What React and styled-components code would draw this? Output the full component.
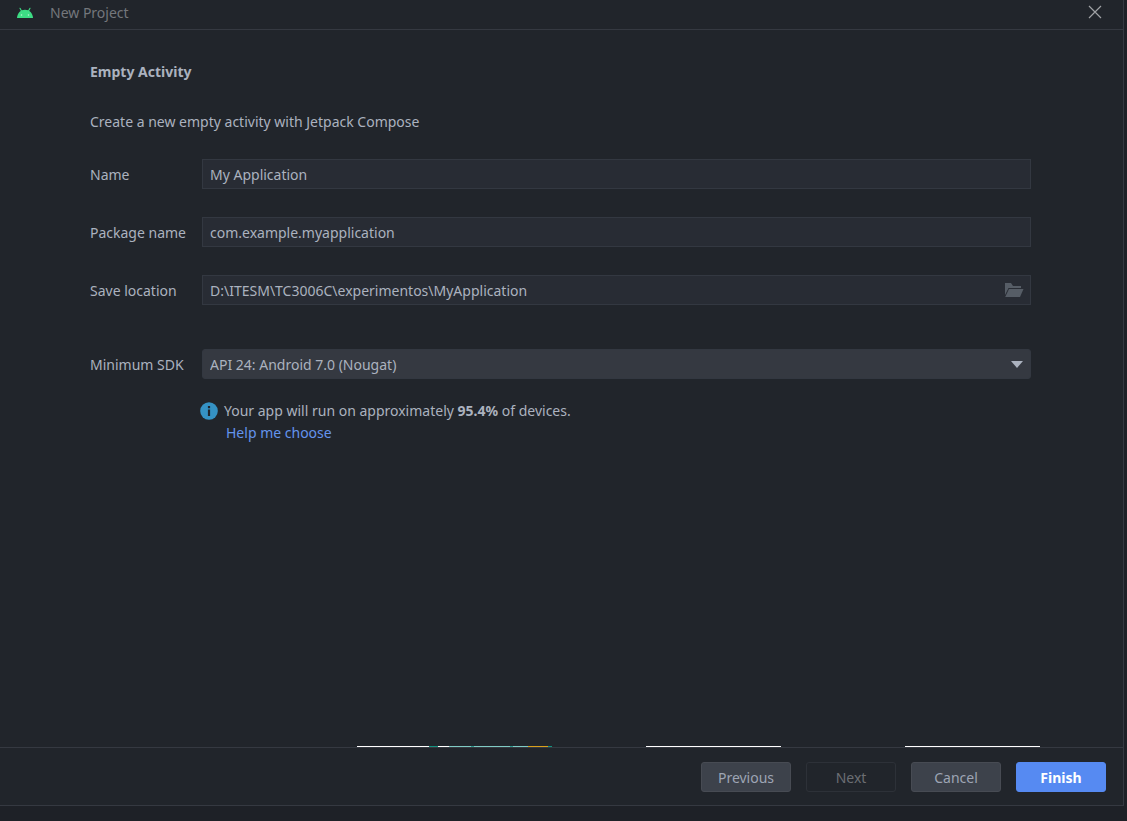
import React, { useState } from "react";
import styled, { createGlobalStyle, css } from "styled-components";

const GlobalStyle = createGlobalStyle`
  *, *::before, *::after { box-sizing: border-box; }
  body {
    margin: 0;
    background: #1e2127;
    color: #abb2bf;
    font: 14px/22px "Segoe UI", "Noto Sans", "Open Sans", sans-serif;
  }
`;

const Screen = styled.div`
  display: flex;
  min-height: 100vh;
  padding: 0 3px 15px 0;
`;

const Dialog = styled.div`
  display: flex;
  flex: 1;
  flex-direction: column;
  background: #21252b;
  border: solid #353941;
  border-width: 0 1px 1px 0;
`;

const TitleBar = styled.header`
  display: flex;
  align-items: center;
  height: 30px;
  padding: 0 19px 4px 16px;
  border-bottom: 1px solid #353941;
  color: #74777c;
`;

const Title = styled.span`
  flex: 1;
  margin-left: 16px;
`;

const CloseButton = styled.button`
  display: flex;
  padding: 2px 2px 4px;
  border: 0;
  background: none;
  color: #a0a2a5;
`;

const Content = styled.main`
  display: flex;
  flex: 1;
  flex-direction: column;
  padding: 31px 92px 0 90px;
`;

const Heading = styled.h1`
  margin: 0;
  font-size: 14px;
  line-height: 22px;
  font-weight: 700;
`;

const Description = styled.p`
  margin: 28px 0 26px;
`;

const Form = styled.form`
  display: flex;
  flex-direction: column;
`;

const Row = styled.div`
  display: grid;
  grid-template-columns: 112px 1fr;
  align-items: center;
  margin-top: ${(p) => (p.$gap || 0)}px;
`;

const Label = styled.label`
  padding-top: 2px;
`;

const Field = styled.div`
  position: relative;
  display: flex;
`;

const control = css`
  width: 100%;
  height: 30px;
  margin: 0;
  padding: 1px 7px 0;
  color: inherit;
  font: inherit;
  outline: none;
`;

const TextInput = styled.input`
  ${control}
  border: 1px solid #333841;
  background: #282c34;
`;

const Select = styled.select`
  ${control}
  appearance: none;
  border: 1px solid #333841;
  border-radius: 3px;
  background: #353941;
`;

const BrowseButton = styled.button`
  position: absolute;
  top: 7px;
  right: 7px;
  display: flex;
  padding: 0;
  border: 0;
  background: none;
  color: #565d66;
`;

const Arrow = styled.svg`
  position: absolute;
  top: 12px;
  right: 8px;
  pointer-events: none;
`;

const Hint = styled.div`
  margin: 21px 0 0 110px;
`;

const HintLine = styled.p`
  display: flex;
  align-items: center;
  gap: 6px;
  margin: 0;
`;

const HelpLink = styled.a`
  margin-left: 26px;
  color: #6494ed;
  text-decoration: none;
`;

const Peek = styled.div`
  display: flex;
  height: 1px;
  padding: 0 83px 0 357px;
  justify-content: space-between;
`;

const PeekCard = styled.div`
  display: flex;
  width: ${(p) => p.$width}px;
  background: #fff;
`;

const Stripe = styled.span`
  flex: ${(p) => p.$size};
  background: ${(p) => p.$color};
`;

const PeekPair = styled.div`
  display: flex;
  gap: 124px;
`;

const Footer = styled.footer`
  display: flex;
  justify-content: flex-end;
  gap: 15px;
  padding: 14px 17px 13px;
  border-top: 1px solid #353941;
`;

const Button = styled.button`
  width: 90px;
  height: 30px;
  padding: 1px 0 0;
  border: 1px solid ${(p) => (p.$primary ? "#568af2" : "#474b53")};
  border-radius: 3px;
  background: ${(p) => (p.$primary ? "#568af2" : "#3d424b")};
  color: ${(p) => (p.$primary ? "#fff" : "#9da5b4")};
  font: inherit;
  font-weight: ${(p) => (p.$primary ? 700 : 400)};

  &:disabled {
    border-color: #2d3138;
    background: transparent;
    color: #6b6e73;
  }
`;

const stripes = [
  [72, "#ffffff"],
  [9, "#15927f"],
  [11, "#ffffff"],
  [22, "#80cbc4"],
  [3, "#2f9a8f"],
  [36, "#80cbc4"],
  [3, "#2f9a8f"],
  [15, "#80cbc4"],
  [20, "#d9a01c"],
  [4, "#15927f"],
];

const AndroidIcon = () => (
  <svg width="18" height="18" viewBox="0 0 18 18" aria-hidden="true">
    <path d="M4 4.300 5.800 7.600M14 4.300 12.200 7.600" stroke="#3ddc84" strokeWidth="1.100" strokeLinecap="round" />
    <path d="M1 14C1.300 9.300 4.600 5.800 9 5.800s7.700 3.500 8 8.200Z" fill="#3ddc84" />
    <circle cx="5.500" cy="11" r=".8" fill="#b9f3d1" />
    <circle cx="12.500" cy="11" r=".8" fill="#b9f3d1" />
  </svg>
);

const CloseIcon = () => (
  <svg width="14" height="14" viewBox="0 0 14 14" aria-hidden="true">
    <path d="m1 1 12 12M13 1 1 13" stroke="currentColor" strokeWidth="1.2" />
  </svg>
);

const FolderIcon = () => (
  <svg width="20" height="16" viewBox="0 0 20 16" fill="currentColor" aria-hidden="true">
    <path d="M1 13V1h6l2 3h8v2H4.500Z" />
    <path d="M5 7h14.500L16 15H1.200Z" />
  </svg>
);

const InfoIcon = () => (
  <svg width="18" height="18" viewBox="0 0 18 18" aria-hidden="true">
    <circle cx="9" cy="9" r="8.800" fill="#3592c4" />
    <path d="M7.900 4h2.200v2.200H7.900ZM7.900 7.500h2.200V14H7.900Z" fill="#21252b" />
  </svg>
);

export default function App() {
  const [name, setName] = useState("My Application");
  const [pkg, setPkg] = useState("com.example.myapplication");
  const [location, setLocation] = useState("D:\\ITESM\\TC3006C\\experimentos\\MyApplication");

  return (
    <>
      <GlobalStyle />
      <Screen>
        <Dialog role="dialog" aria-labelledby="dialog-title">
          <TitleBar>
            <AndroidIcon />
            <Title id="dialog-title">New Project</Title>
            <CloseButton type="button" aria-label="Close">
              <CloseIcon />
            </CloseButton>
          </TitleBar>

          <Content>
            <Heading>Empty Activity</Heading>
            <Description>Create a new empty activity with Jetpack Compose</Description>
            <Form>
              <Row>
                <Label htmlFor="name">Name</Label>
                <Field>
                  <TextInput id="name" value={name} onChange={(e) => setName(e.target.value)} />
                </Field>
              </Row>
              <Row $gap={28}>
                <Label htmlFor="package">Package name</Label>
                <Field>
                  <TextInput id="package" value={pkg} onChange={(e) => setPkg(e.target.value)} />
                </Field>
              </Row>
              <Row $gap={28}>
                <Label htmlFor="location">Save location</Label>
                <Field>
                  <TextInput id="location" value={location} onChange={(e) => setLocation(e.target.value)} />
                  <BrowseButton type="button" aria-label="Browse">
                    <FolderIcon />
                  </BrowseButton>
                </Field>
              </Row>
              <Row $gap={44}>
                <Label htmlFor="sdk">Minimum SDK</Label>
                <Field>
                  <Select id="sdk" defaultValue="24">
                    <option value="24">API 24: Android 7.0 (Nougat)</option>
                  </Select>
                  <Arrow width="12" height="7" viewBox="0 0 12 7" aria-hidden="true">
                    <path d="M0 0h12L6 7Z" fill="#abb2bf" />
                  </Arrow>
                </Field>
              </Row>
            </Form>
            <Hint>
              <HintLine>
                <InfoIcon />
                <span>
                  Your app will run on approximately <b>95.4%</b> of devices.
                </span>
              </HintLine>
              <HelpLink href="#help">Help me choose</HelpLink>
            </Hint>
          </Content>

          <Peek aria-hidden="true">
            <PeekCard $width={195}>
              {stripes.map(([size, color], i) => (
                <Stripe key={i} $size={size} $color={color} />
              ))}
            </PeekCard>
            <PeekPair>
              <PeekCard $width={135} />
              <PeekCard $width={135} />
            </PeekPair>
          </Peek>

          <Footer>
            <Button type="button">Previous</Button>
            <Button type="button" disabled>Next</Button>
            <Button type="button">Cancel</Button>
            <Button type="button" $primary>Finish</Button>
          </Footer>
        </Dialog>
      </Screen>
    </>
  );
}
